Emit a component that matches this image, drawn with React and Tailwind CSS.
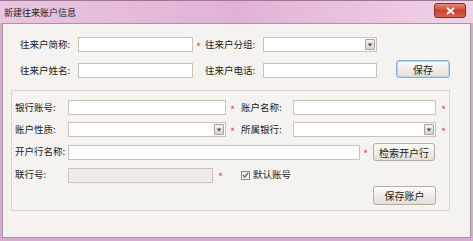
import React from 'react';

const font = { fontFamily: '"Noto Sans CJK SC", "Noto Sans", sans-serif' };

const Star = ({ className = '' }) => (
    <span className={`block text-[11px] leading-none text-[#ec4a64] mt-[3px] ${className}`}>*</span>
);

const Input = ({ w, disabled }) => (
    <div className={`${w} h-[15px] border border-[#cbc3b7] ${disabled ? 'bg-[#efece6]' : 'bg-white'}`}></div>
);

const Combo = ({ w }) => (
    <div className={`${w} h-[15px] border border-[#cbc3b7] bg-white flex justify-end items-center pr-[1px]`}>
        <div className="w-[10px] h-[11px] border border-[#a8a294] rounded-[1px] bg-gradient-to-b from-[#f4f2ec] to-[#dcd6ca] flex items-center justify-center">
            <svg width="6" height="4" viewBox="0 0 6 4">
                <path d="M0.5 0.5 L5.5 0.5 L3 3.5 Z" fill="#555" />
            </svg>
        </div>
    </div>
);

const Button = ({ w, h, children, focus }) => (
    <div className={`${w} ${h} rounded-[3px] border ${focus ? 'border-[#7eaee0] shadow-[inset_0_0_0_1px_#bcd6f0]' : 'border-[#b5ae9f]'} bg-gradient-to-b from-[#fdfcfa] to-[#e4dfd4] flex items-center justify-center text-[10px] text-[#222]`}>
        {children}
    </div>
);

const Label = ({ w, children, className = '' }) => (
    <div className={`${w} text-[9.5px] leading-none text-[#222] whitespace-nowrap ${className}`}>{children}</div>
);

export default function App() {
    return (
        <div className="w-[473px] h-[241px] bg-[#d9a9cf] px-[2px] pb-[3px] flex flex-col" style={font}>
            {/* Title bar */}
            <div className="h-[23px] -mx-[2px] px-[4px] bg-gradient-to-r from-[#e9c6de] via-[#e2b2d5] to-[#f1d3e7] flex items-start border-t border-[#9a7a90]">
                <div className="pt-[5px] text-[9px] text-[#222]">新建往来账户信息</div>
                <div className="ml-auto mr-[3px] mt-[2px] w-[32px] h-[15px] rounded-[3px] border border-[#8c2a20] bg-gradient-to-b from-[#e98a78] via-[#c8422f] to-[#d9604a] flex items-center justify-center">
                    <svg width="9" height="8" viewBox="0 0 9 8">
                        <path d="M1 1 L8 7 M8 1 L1 7" stroke="#fff" strokeWidth="2" />
                    </svg>
                </div>
            </div>

            {/* Content */}
            <div className="flex-1 bg-[#f5f3ef] border border-[#9c9c9c] flex flex-col">
                {/* Top rows */}
                <div className="mt-[13px] flex items-center h-[15px]">
                    <Label w="w-[58px]" className="ml-[17px]">往来户简称:</Label>
                    <Input w="w-[115px]" />
                    <div className="w-[12px] pl-[3px]"><Star /></div>
                    <Label w="w-[58px]">往来户分组:</Label>
                    <Combo w="w-[114px]" />
                </div>
                <div className="mt-[8px] flex items-end h-[18px]">
                    <Label w="w-[58px]" className="ml-[17px] mb-[3px]">往来户姓名:</Label>
                    <Input w="w-[115px]" />
                    <div className="w-[12px]"></div>
                    <Label w="w-[58px]" className="mb-[3px]">往来户电话:</Label>
                    <Input w="w-[114px]" />
                    <div className="ml-[19px]">
                        <Button w="w-[54px]" h="h-[18px]" focus>保存</Button>
                    </div>
                </div>

                {/* Group box */}
                <div className="ml-[8px] mt-[12px] w-[439px] border border-[#dcd6ca] pb-[5px] flex flex-col">
                    <div className="mt-[9px] flex items-center h-[15px]">
                        <Label w="w-[56px]" className="pl-[3px]">银行账号:</Label>
                        <Input w="w-[158px]" />
                        <div className="w-[15px] pl-[4px]"><Star /></div>
                        <Label w="w-[52px]">账户名称:</Label>
                        <Input w="w-[143px]" />
                        <div className="pl-[5px]"><Star /></div>
                    </div>
                    <div className="mt-[7px] flex items-center h-[15px]">
                        <Label w="w-[56px]" className="pl-[3px]">账户性质:</Label>
                        <Combo w="w-[158px]" />
                        <div className="w-[15px] pl-[4px]"><Star /></div>
                        <Label w="w-[52px]">所属银行:</Label>
                        <Combo w="w-[143px]" />
                        <div className="pl-[5px]"><Star /></div>
                    </div>
                    <div className="mt-[6px] flex items-center h-[18px]">
                        <Label w="w-[56px]" className="pl-[3px]">开户行名称:</Label>
                        <Input w="w-[292px]" />
                        <div className="w-[13px] pl-[3px]"><Star /></div>
                        <Button w="w-[62px]" h="h-[18px]">检索开户行</Button>
                    </div>
                    <div className="mt-[6px] flex items-center h-[16px]">
                        <Label w="w-[56px]" className="pl-[3px]">联行号:</Label>
                        <Input w="w-[145px]" disabled />
                        <div className="w-[28px] pl-[5px]"><Star /></div>
                        <div className="w-[9px] h-[9px] border border-[#8f8a80] bg-[#f2f0ea] flex items-center justify-center">
                            <svg width="7" height="6" viewBox="0 0 7 6">
                                <path d="M0.8 3 L2.8 5 L6.2 0.8" stroke="#6a665e" strokeWidth="1.3" fill="none" />
                            </svg>
                        </div>
                        <Label w="w-[40px]" className="ml-[3px]">默认账号</Label>
                    </div>
                    <div className="mt-[3px] flex h-[19px]">
                        <div className="ml-[361px]">
                            <Button w="w-[63px]" h="h-[19px]">保存账户</Button>
                        </div>
                    </div>
                </div>
            </div>
        </div>
    );
}
